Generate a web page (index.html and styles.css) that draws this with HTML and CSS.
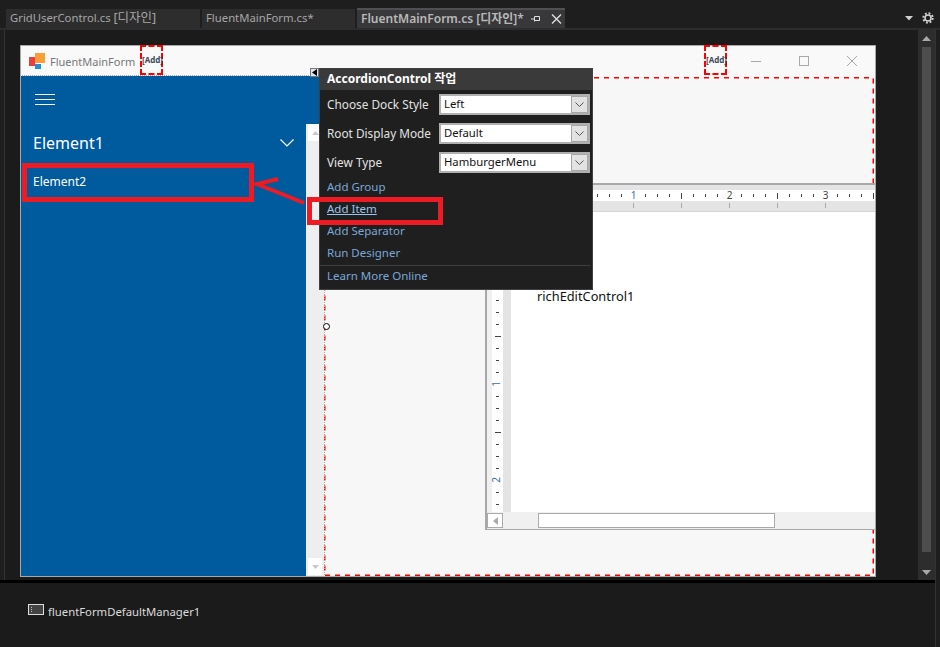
FILE: index.html
```html
<!DOCTYPE html>
<html lang="ko">
<head>
    <meta charset="UTF-8">
    <meta name="viewport" content="width=device-width, initial-scale=1.0">
    <title>FluentMainForm.cs [디자인]</title>
    <link rel="stylesheet" href="styles.css">
</head>
<body>
    <div class="tabs">
        <div class="tab tab-one">GridUserControl.cs <span class="ko">[디자인]</span></div>
        <div class="tab tab-two">FluentMainForm.cs*</div>
        <div class="tab tab-active">
            <span class="tab-name">FluentMainForm.cs [디자인]*</span>
            <svg class="pin" width="10" height="8" viewBox="0 0 10 8"><path d="M0 4h3M3.500 1.500v5M3.500 1.500h5v4h-5M3.500 5.500h5" fill="none" stroke="#ddd"/></svg>
            <svg class="tab-close" width="11" height="10" viewBox="0 0 11 10"><path d="M1 .5l9 9M10 .5l-9 9" stroke="#ddd" stroke-width="1.400"/></svg>
        </div>
        <div class="tab-tools">
            <svg width="8" height="5" viewBox="0 0 8 5"><path d="M0 0h8L4 4.500z" fill="#d0d0d0"/></svg>
            <svg width="12" height="12" viewBox="0 0 12 12"><circle cx="6" cy="6" r="3" fill="none" stroke="#d0d0d0" stroke-width="1.600"/><circle cx="6" cy="6" r="4.700" fill="none" stroke="#d0d0d0" stroke-width="2" stroke-dasharray="1.850 1.840"/></svg>
        </div>
    </div>

    <div class="content">
        <div class="main">
            <div class="workspace">
                <div class="designer">
                    <div class="form">
                        <div class="titlebar">
                            <svg class="logo" width="16" height="16" viewBox="0 0 16 16">
                                <rect x="0" y="4" width="6" height="9" fill="#e8403c"/>
                                <rect x="6" y="0" width="10" height="10" fill="#fb9d3b"/>
                                <rect x="6" y="11" width="6" height="5" fill="#2390d6"/>
                            </svg>
                            <span class="form-title">FluentMainForm</span>
                            <span class="add-box add-left">[Add]</span>
                            <span class="add-box add-right">[Add]</span>
                            <div class="win-btns">
                                <svg width="10" height="10" viewBox="0 0 10 10"><path d="M0 5.500h10" stroke="#a8a8a8"/></svg>
                                <svg width="10" height="10" viewBox="0 0 10 10"><rect x=".5" y=".5" width="9" height="9" fill="none" stroke="#a8a8a8"/></svg>
                                <svg width="10" height="10" viewBox="0 0 10 10"><path d="M0 0l10 10M10 0L0 10" stroke="#a8a8a8"/></svg>
                            </div>
                        </div>
                        <div class="form-body">
                            <div class="accordion">
                                <div class="acc-top">
                                    <div class="burger"><i></i><i></i><i></i></div>
                                </div>
                                <div class="acc-lower">
                                    <div class="acc-list">
                                        <div class="acc-group">
                                            <span>Element1</span>
                                            <svg width="14" height="8" viewBox="0 0 14 8"><path d="M.5.5L7 7l6.500-6.500" fill="none" stroke="#fff" stroke-width="1.200"/></svg>
                                        </div>
                                        <div class="acc-item">Element2</div>
                                    </div>
                                    <div class="acc-scroll">
                                        <div class="scroll-btn"><svg width="7" height="4" viewBox="0 0 7 4"><path d="M3.500 0L7 4H0z" fill="#c8c8c8"/></svg></div>
                                        <div class="scroll-btn"><svg width="7" height="4" viewBox="0 0 7 4"><path d="M0 0h7L3.500 4z" fill="#c8c8c8"/></svg></div>
                                    </div>
                                </div>
                            </div>
                            <div class="panel">
                                <svg class="dashes" width="550" height="499" viewBox="0 0 550 499">
                                    <path d="M0 .75H549.250V498.250H.75V0" fill="none" stroke="#f00" stroke-width="1.500" stroke-dasharray="5 5"/>
                                </svg>
                                <div class="rich-edit">
                                    <div class="ruler-top">
                                        <svg width="388" height="26" viewBox="0 0 388 26">
                                            <defs>
                                                <pattern id="hticks" x="2" y="5" width="12" height="11" patternUnits="userSpaceOnUse">
                                                    <rect x="0" y="4" width="1" height="3" fill="#444"/>
                                                </pattern>
                                            </defs>
                                            <rect y="0" width="388" height="5" fill="#e4e4e4"/>
                                            <rect y="5" width="388" height="11" fill="#fff"/>
                                            <rect y="16" width="388" height="10" fill="#e4e4e4"/>
                                            <rect y="5" width="388" height="11" fill="url(#hticks)"/>
                                            <g fill="#444">
                                                <rect x="194" y="8" width="1" height="6"/>
                                                <rect x="290" y="8" width="1" height="6"/>
                                                <rect x="386" y="8" width="1" height="6"/>
                                            </g>
                                            <g fill="#aaa">
                                                <rect x="146" y="18" width="1" height="5"/>
                                                <rect x="194" y="18" width="1" height="5"/>
                                                <rect x="242" y="18" width="1" height="5"/>
                                                <rect x="290" y="18" width="1" height="5"/>
                                                <rect x="338" y="18" width="1" height="5"/>
                                            </g>
                                            <g class="ruler-nums">
                                                <rect x="142" y="6" width="9" height="9" fill="#fff"/>
                                                <rect x="238" y="6" width="9" height="9" fill="#fff"/>
                                                <rect x="334" y="6" width="9" height="9" fill="#fff"/>
                                                <text x="146.500" y="14" class="num-blue">1</text>
                                                <text x="242.500" y="14">2</text>
                                                <text x="338.500" y="14">3</text>
                                            </g>
                                        </svg>
                                    </div>
                                    <div class="edit-mid">
                                        <div class="ruler-left">
                                            <svg width="24" height="300" viewBox="0 0 24 300">
                                                <defs>
                                                    <pattern id="vticks" x="0" y="4" width="24" height="12" patternUnits="userSpaceOnUse">
                                                        <rect x="9" y="0" width="3" height="1" fill="#444"/>
                                                    </pattern>
                                                </defs>
                                                <rect x="5" width="11" height="300" fill="#fff"/>
                                                <rect x="16" width="8" height="300" fill="#e4e4e4"/>
                                                <rect x="5" y="80" width="11" height="220" fill="url(#vticks)"/>
                                                <g fill="#444">
                                                    <rect x="8" y="124" width="6" height="1"/>
                                                    <rect x="8" y="220" width="6" height="1"/>
                                                </g>
                                                <rect x="5" y="167" width="11" height="9" fill="#fff"/>
                                                <rect x="5" y="263" width="11" height="9" fill="#fff"/>
                                                <g class="ruler-nums">
                                                    <text transform="translate(13 172) rotate(-90)" class="num-blue">1</text>
                                                    <text transform="translate(13 268) rotate(-90)" class="num-blue">2</text>
                                                </g>
                                            </svg>
                                        </div>
                                        <div class="edit-page">richEditControl1</div>
                                    </div>
                                    <div class="edit-hscroll">
                                        <div class="hs-btn"><svg width="5" height="8" viewBox="0 0 5 8"><path d="M5 0v8L0 4z" fill="#aaa"/></svg></div>
                                        <div class="hs-thumb"></div>
                                    </div>
                                </div>
                            </div>
                        </div>
                    </div>
                </div>
                <div class="vscroll">
                    <svg width="9" height="5" viewBox="0 0 9 5"><path d="M4.500 0L9 5H0z" fill="#a8a8a8"/></svg>
                    <div class="vthumb"></div>
                    <svg width="9" height="5" viewBox="0 0 9 5"><path d="M0 0h9L4.500 5z" fill="#a8a8a8"/></svg>
                </div>
            </div>
            <div class="tray">
                <svg width="16" height="11" viewBox="0 0 16 11"><rect x=".5" y=".5" width="15" height="10" fill="#444" stroke="#ddd"/><path d="M3.500 3v1M3.500 5v1M3.500 7v1" stroke="#bbb"/></svg>
                <span>fluentFormDefaultManager1</span>
            </div>
        </div>
        <div class="edge"></div>
    </div>

    <!-- smart tag -->
    <div class="tag-handle"><svg width="5" height="7" viewBox="0 0 5 7"><path d="M5 0v7L0 3.500z" fill="#000"/></svg></div>
    <div class="grip"></div>
    <div class="popup">
        <div class="popup-head">AccordionControl 작업</div>
        <div class="popup-body">
            <div class="field">
                <label>Choose Dock Style</label>
                <div class="select"><span>Left</span><b><svg width="9" height="5" viewBox="0 0 9 5"><path d="M.5.500l4 4 4-4" fill="none" stroke="#555"/></svg></b></div>
            </div>
            <div class="field">
                <label>Root Display Mode</label>
                <div class="select"><span>Default</span><b><svg width="9" height="5" viewBox="0 0 9 5"><path d="M.5.500l4 4 4-4" fill="none" stroke="#555"/></svg></b></div>
            </div>
            <div class="field">
                <label>View Type</label>
                <div class="select"><span>HamburgerMenu</span><b><svg width="9" height="5" viewBox="0 0 9 5"><path d="M.5.500l4 4 4-4" fill="none" stroke="#555"/></svg></b></div>
            </div>
            <div class="links">
                <a>Add Group</a>
                <a class="hover">Add Item</a>
                <a>Add Separator</a>
                <a>Run Designer</a>
            </div>
            <a class="learn">Learn More Online</a>
        </div>
    </div>

    <!-- red marks drawn over the shot -->
    <div class="mark mark-element"></div>
    <div class="mark mark-item"></div>
    <svg class="mark-arrow" width="60" height="34" viewBox="0 0 60 34">
        <path d="M52 28L5 9l21-5" fill="none" stroke="#ed1c24" stroke-width="4"/>
    </svg>
</body>
</html>
```

FILE: styles.css
```css
* {
    margin: 0;
    padding: 0;
    box-sizing: border-box;
}

html, body {
    width: 940px;
    height: 647px;
    overflow: hidden;
}

body {
    position: relative;
    display: flex;
    flex-direction: column;
    background: #1e1e1e;
    color: #ddd;
    font-family: "Noto Sans", "Noto Sans CJK KR", sans-serif;
    font-size: 12px;
}

/* tabs */
.tabs {
    height: 28px;
    display: flex;
    align-items: flex-end;
    padding-left: 6px;
}

.tab {
    height: 19px;
    line-height: 18px;
    padding-left: 4px;
    background: #2d2d2d;
    color: #a6a6a6;
    font-size: 11.300px;
    white-space: nowrap;
}

.ko {
    font-size: 12.500px;
}

.tab-one {
    width: 194px;
    margin-right: 2px;
}

.tab-two {
    width: 153px;
    margin-right: 2px;
}

.tab-active {
    width: 208px;
    height: 20px;
    display: flex;
    align-items: center;
    border-top: 2px solid #505052;
    background: #38383a;
    color: #b8b8b8;
    font-size: 12px;
    font-weight: 600;
}

.tab-name {
    width: 170px;
}

.pin {
    margin-right: 10px;
}

.tab-tools {
    margin-left: auto;
    height: 28px;
    display: flex;
    align-items: center;
    gap: 9px;
    padding: 8px 6px 0 0;
}

/* designer */
.content {
    flex: 1;
    display: flex;
    min-height: 0;
}

.main {
    width: 935px;
    display: flex;
    flex-direction: column;
}

.edge {
    flex: 1;
    border-left: 1px solid #333337;
    border-top: 2px solid #2d2d30;
}

.workspace {
    height: 552px;
    display: flex;
    border-top: 2px solid #2d2d30;
}

.designer {
    flex: 1;
    margin-left: 4px;
    padding: 15px 0 0 15px;
    border-left: 1px solid #333337;
    background: #1b1b1b;
}

.vscroll {
    width: 17px;
    display: flex;
    flex-direction: column;
    align-items: center;
    padding: 6px 0 5px;
    background: #2d2d2d;
}

.vthumb {
    width: 9px;
    height: 505px;
    margin: 6px 0 auto;
    background: #4d4d4d;
}

.tray {
    flex: 1;
    display: flex;
    align-items: flex-start;
    gap: 4px;
    padding: 21px 0 0 28px;
    border-top: 3px solid #000;
    background: #1b1b1b;
    color: #dcdcdc;
    font-size: 11.300px;
    line-height: 16px;
}

/* form under design */
.form {
    width: 856px;
    height: 532px;
    display: flex;
    flex-direction: column;
    border: 1px solid #a8a8a8;
    background: #f7f7f7;
}

.titlebar {
    position: relative;
    height: 30px;
    flex: none;
    display: flex;
    align-items: center;
    padding-left: 8px;
    background: #f9f9f9;
    color: #777;
}

.logo {
    margin: 0 5px 0 0;
}

.form-title {
    font-size: 11px;
}

.add-box {
    position: absolute;
    top: -1px;
    width: 23px;
    height: 30px;
    line-height: 26px;
    border: 2px dashed #f00;
    text-align: center;
    color: #3b4a5c;
    font-size: 8px;
    font-weight: 700;
    white-space: nowrap;
}

.add-left {
    left: 119px;
}

.add-right {
    left: 683px;
}

.win-btns {
    position: absolute;
    right: 18px;
    top: 10px;
    display: flex;
    gap: 38px;
}

.form-body {
    flex: 1;
    display: flex;
    min-height: 0;
}

.accordion {
    width: 304px;
    display: flex;
    flex-direction: column;
    outline: 1px dotted #aaa;
    position: relative;
    z-index: 1;
}

.acc-top {
    height: 48px;
    padding: 18px 0 0 14px;
    background: #005a9e;
}

.burger {
    width: 20px;
    display: flex;
    flex-direction: column;
    gap: 4px;
}

.burger i {
    height: 1px;
    background: #fff;
}

.acc-lower {
    flex: 1;
    display: flex;
    min-height: 0;
}

.acc-list {
    flex: 1;
    background: #005a9e;
    color: #fff;
}

.acc-group {
    height: 37px;
    display: flex;
    align-items: center;
    justify-content: space-between;
    padding: 0 12px;
    margin-bottom: 2px;
    font-size: 16px;
}

.acc-item {
    height: 38px;
    line-height: 38px;
    padding-left: 12px;
}

.acc-scroll {
    width: 18px;
    display: flex;
    flex-direction: column;
    justify-content: space-between;
    padding: 0 2px 1px 2px;
    background: #eeeeee;
}

.scroll-btn {
    height: 17px;
    display: flex;
    align-items: center;
    justify-content: center;
    background: #fff;
}

.panel {
    position: relative;
    flex: 1;
    display: flex;
    padding: 107px 0 46px 161px;
}

.dashes {
    position: absolute;
    left: 0;
    top: 1px;
}

.rich-edit {
    position: relative;
    flex: 1;
    display: flex;
    flex-direction: column;
    border: solid #a8a8a8;
    border-width: 2px 0 1px 2px;
    background: #f0f0f0;
}

.ruler-top {
    height: 27px;
    flex: none;
    border-bottom: 1px solid #d4d4d4;
}

.ruler-top svg,
.ruler-left svg {
    display: block;
}

.ruler-nums text {
    font-size: 10px;
    text-anchor: middle;
    fill: #444;
}

.ruler-nums .num-blue {
    fill: #3a6ea5;
}

.edit-mid {
    flex: 1;
    display: flex;
    min-height: 0;
}

.ruler-left {
    width: 24px;
    flex: none;
}

.edit-page {
    flex: 1;
    padding: 76px 0 0 26px;
    background: #fff;
    color: #111;
    font-size: 12.800px;
    line-height: 16px;
}

.edit-hscroll {
    height: 17px;
    flex: none;
    display: flex;
    align-items: center;
    background: #f0f0f0;
}

.hs-btn {
    width: 16px;
    height: 15px;
    display: flex;
    align-items: center;
    justify-content: center;
    border: 1px solid #aaa;
    background: #fff;
}

.hs-thumb {
    width: 237px;
    height: 15px;
    margin-left: 35px;
    border: 1px solid #aaa;
    background: #fff;
}

/* smart tag popup */
.tag-handle {
    position: absolute;
    left: 310px;
    top: 68px;
    width: 9px;
    height: 9px;
    display: flex;
    align-items: center;
    justify-content: center;
    background: #dfe7ee;
    border: 1px solid #777;
    z-index: 2;
}

.grip {
    position: absolute;
    left: 323px;
    top: 323px;
    width: 7px;
    height: 7px;
    border: 1px solid #000;
    border-radius: 50%;
    background: #fff;
    z-index: 2;
}

.popup {
    position: absolute;
    left: 319px;
    top: 68px;
    width: 274px;
    height: 222px;
    display: flex;
    flex-direction: column;
    border: 1px solid #3f3f41;
    background: #1f1f1f;
    z-index: 2;
}

.popup-head {
    height: 21px;
    flex: none;
    line-height: 20px;
    padding-left: 7px;
    background: #3a3a3a;
    color: #fff;
    font-weight: 700;
}

.popup-body {
    flex: 1;
    display: flex;
    flex-direction: column;
    padding: 4px 2px 0 0;
}

.field {
    height: 21px;
    display: flex;
    align-items: center;
    margin-bottom: 8px;
}

.field label {
    width: 119px;
    padding: 0 0 2px 7px;
    color: #e2e2e2;
    font-size: 11.800px;
}

.select {
    width: 151px;
    height: 21px;
    display: flex;
    align-items: center;
    justify-content: space-between;
    padding-left: 3px;
    border: 2px solid #b0b0b0;
    background: #fff;
    color: #111;
    font-size: 11.300px;
}

.select span {
    padding-bottom: 2px;
}

.select b {
    width: 17px;
    height: 17px;
    display: flex;
    align-items: center;
    justify-content: center;
    border: 1px solid #a8a8a8;
    background: #e2e2e2;
}

.links {
    display: flex;
    flex-direction: column;
    align-items: flex-start;
    padding-left: 7px;
    margin-top: -4px;
}

.links a,
.learn {
    height: 22px;
    line-height: 20px;
    color: #7aa7d8;
    font-size: 11.500px;
}

.links a.hover {
    color: #9cc4ee;
    text-decoration: underline;
}

.learn {
    padding-left: 7px;
    border-top: 1px solid #3f3f41;
}

/* annotation */
.mark {
    position: absolute;
    border: 5px solid #ed1c24;
    z-index: 3;
}

.mark-element {
    left: 22px;
    top: 163px;
    width: 232px;
    height: 39px;
}

.mark-item {
    left: 307px;
    top: 197px;
    width: 136px;
    height: 28px;
}

.mark-arrow {
    position: absolute;
    left: 252px;
    top: 175px;
    z-index: 3;
}
```
